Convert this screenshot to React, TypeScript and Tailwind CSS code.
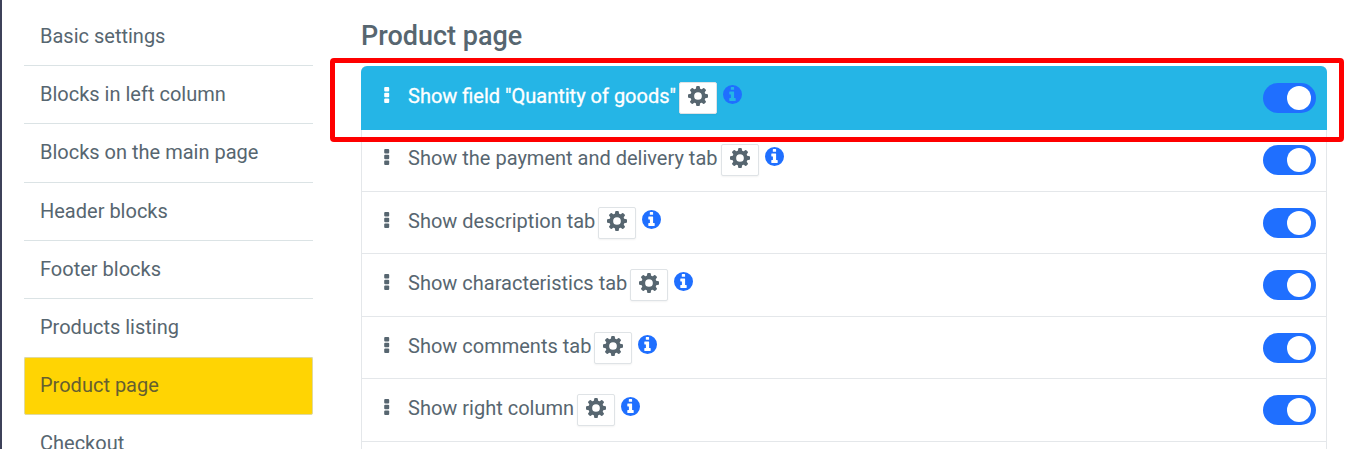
import { useState } from 'react';

const SECTIONS = [
  'Basic settings',
  'Blocks in left column',
  'Blocks on the main page',
  'Header blocks',
  'Footer blocks',
  'Products listing',
  'Product page',
  'Checkout',
];

const BLOCKS = [
  { id: 'quantity', label: 'Show field "Quantity of goods"' },
  { id: 'payment', label: 'Show the payment and delivery tab' },
  { id: 'description', label: 'Show description tab' },
  { id: 'characteristics', label: 'Show characteristics tab' },
  { id: 'comments', label: 'Show comments tab' },
  { id: 'right-column', label: 'Show right column' },
];

const TEETH = [0, 45, 90, 135, 180, 225, 270, 315];

function GearIcon() {
  return (
    <svg viewBox="0 0 20 20" className="size-5" aria-hidden="true">
      <circle cx="10" cy="10" r="5.7" fill="none" stroke="currentColor" strokeWidth="3.7" />
      {TEETH.map((angle) => (
        <path
          key={angle}
          d="M8.9 0h2.2q0.5 0 0.6 0.5l0.7 3.3h-4.8l0.7-3.3q0.1-0.5 0.6-0.5z"
          fill="currentColor"
          transform={`rotate(${angle} 10 10)`}
        />
      ))}
    </svg>
  );
}

function InfoIcon() {
  return (
    <svg viewBox="0 0 19 19" className="size-[19px]" aria-hidden="true">
      <path
        fill="currentColor"
        fillRule="evenodd"
        d="M9.5 0a9.5 9.5 0 1 1 0 19a9.5 9.5 0 1 1 0-19zM8.2 2h2.5q0.4 0 0.4 0.4v2q0 0.4-0.4 0.4h-2.5q-0.4 0-0.4-0.4v-2q0-0.4 0.4-0.4zM6.7 6.6h4q0.4 0 0.4 0.4v6.1h1.2q0.4 0 0.4 0.4v2q0 0.4-0.4 0.4h-5.6q-0.4 0-0.4-0.4v-2q0-0.4 0.4-0.4h1.2v-3.7h-1.2q-0.4 0-0.4-0.4v-2q0-0.4 0.4-0.4z"
      />
    </svg>
  );
}

function DragDots() {
  return (
    <svg viewBox="0 0 6 16" className="h-4 w-1.5" fill="currentColor" aria-hidden="true">
      <rect x="0.2" y="0" width="5" height="4.4" rx="1" />
      <rect x="0.2" y="5.8" width="5" height="4.4" rx="1" />
      <rect x="0.2" y="11.6" width="5" height="4.4" rx="1" />
    </svg>
  );
}

type BlockRowProps = {
  id: string;
  label: string;
  selected: boolean;
};

function BlockRow({ id, label, selected }: BlockRowProps) {
  const [enabled, setEnabled] = useState(true);

  return (
    <li
      className={
        selected
          ? 'relative -mx-px -mb-px flex h-16 items-start rounded-t-md bg-[#25b5e6] pt-4 pr-[11px] pl-[23px] text-white'
          : 'flex items-start border-b border-[#e4e7ea] pt-[15px] pr-2.5 pl-[22px] odd:h-[62px] even:h-[63px]'
      }
    >
      <button type="button" aria-label={`Move ${label}`} className="mt-[5px] mr-[18px] cursor-move">
        <DragDots />
      </button>
      <label
        htmlFor={id}
        className={selected ? 'leading-7 [-webkit-text-stroke:0.3px_currentColor]' : 'leading-7'}
      >
        {label}
      </label>
      <button
        type="button"
        aria-label={`Settings: ${label}`}
        className="ml-[3px] flex h-8 w-[38px] justify-center rounded-xs border border-[#dfe3e6] bg-white pt-[3px] text-[#576670] shadow-xs"
      >
        <GearIcon />
      </button>
      <button type="button" aria-label={`Help: ${label}`} className="mt-[3px] ml-1.5 text-[#1f6fff]">
        <InfoIcon />
      </button>
      <input
        id={id}
        type="checkbox"
        checked={enabled}
        onChange={(e) => setEnabled(e.target.checked)}
        className="mt-px ml-auto flex h-[30px] w-[53px] appearance-none items-center rounded-full bg-gray-300 px-[5px] before:size-6 before:rounded-full before:bg-white checked:justify-end checked:bg-[#1f6fff]"
      />

      {/* Red frame around the highlighted setting */}
      {selected && (
        <span className="pointer-events-none absolute -top-2 -right-[17px] -bottom-3 -left-[31px] rounded-sm border-5 border-[#fe0000]" />
      )}
    </li>
  );
}

function App() {
  const [section, setSection] = useState('Product page');

  return (
    <div className="flex h-screen items-stretch overflow-hidden border-l-2 border-[#3d4159] bg-white font-[Roboto,sans-serif] text-xl text-[#576670]">
      <nav className="ml-[22px] w-[289px] shrink-0 pt-2">
        <ul>
          {SECTIONS.map((name) => (
            <li key={name} className="h-[58px] nth-[3n]:h-[59px]">
              <a
                href="#"
                onClick={() => setSection(name)}
                className={
                  name === section
                    ? '-mt-px block h-full rounded-xs border border-[#dfd9a0] bg-[#ffd403] px-[15px] pt-[13px] leading-7 text-[#665f30]'
                    : 'block h-full border-b border-[#dbe3e5] px-4 pt-3.5 leading-7'
                }
              >
                {name}
              </a>
            </li>
          ))}
        </ul>
      </nav>

      <main className="mr-[19px] ml-12 flex min-w-0 flex-1 flex-col pt-[18px]">
        <h1 className="mb-3 text-[27px] leading-9 font-medium">{section}</h1>
        <ul className="flex-1 rounded-t-md border-x border-[#e4e7ea]">
          {BLOCKS.map((block, i) => (
            <BlockRow key={block.id} id={block.id} label={block.label} selected={i === 0} />
          ))}
        </ul>
      </main>
    </div>
  );
}

export default App;
